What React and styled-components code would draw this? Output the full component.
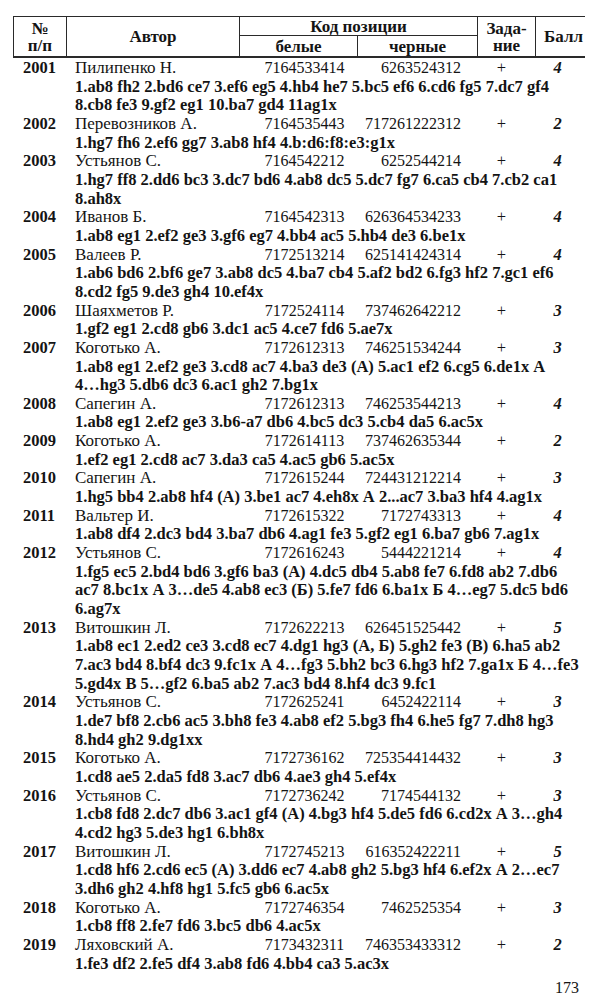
import React from 'react';
import styled, { createGlobalStyle } from 'styled-components';

const GlobalStyle = createGlobalStyle`
  html, body {
    margin: 0;
    padding: 0;
    background: #fff;
  }
  body {
    font-family: 'Liberation Serif', 'Times New Roman', serif;
    color: #141414;
  }
`;

const entries = [
  { n: 2001, author: 'Пилипенко Н.', w: '7164533414', b: '6263524312', s: '4', moves: ['1.ab8 fh2 2.bd6 ce7 3.ef6 eg5 4.hb4 he7 5.bc5 ef6 6.cd6 fg5 7.dc7 gf4', '8.cb8 fe3 9.gf2 eg1 10.ba7 gd4 11ag1x'] },
  { n: 2002, author: 'Перевозников А.', w: '7164535443', b: '717261222312', s: '2', moves: ['1.hg7 fh6 2.ef6 gg7 3.ab8 hf4 4.b:d6:f8:e3:g1x'] },
  { n: 2003, author: 'Устьянов С.', w: '7164542212', b: '6252544214', s: '4', moves: ['1.hg7 ff8 2.dd6 bc3 3.dc7 bd6 4.ab8 dc5 5.dc7 fg7 6.ca5 cb4 7.cb2 ca1', '8.ah8x'] },
  { n: 2004, author: 'Иванов Б.', w: '7164542313', b: '626364534233', s: '4', moves: ['1.ab8 eg1 2.ef2 ge3 3.gf6 eg7 4.bb4 ac5 5.hb4 de3 6.be1x'] },
  { n: 2005, author: 'Валеев Р.', w: '7172513214', b: '625141424314', s: '4', moves: ['1.ab6 bd6 2.bf6 ge7 3.ab8 dc5 4.ba7 cb4 5.af2 bd2 6.fg3 hf2 7.gc1 ef6', '8.cd2 fg5 9.de3 gh4 10.ef4x'] },
  { n: 2006, author: 'Шаяхметов Р.', w: '7172524114', b: '737462642212', s: '3', moves: ['1.gf2 eg1 2.cd8 gb6 3.dc1 ac5 4.ce7 fd6 5.ae7x'] },
  { n: 2007, author: 'Коготько А.', w: '7172612313', b: '746251534244', s: '3', moves: ['1.ab8 eg1 2.ef2 ge3 3.cd8 ac7 4.ba3 de3 (А) 5.ac1 ef2 6.cg5 6.de1x А', '4…hg3 5.db6 dc3 6.ac1 gh2 7.bg1x'] },
  { n: 2008, author: 'Сапегин А.', w: '7172612313', b: '746253544213', s: '4', moves: ['1.ab8 eg1 2.ef2 ge3 3.b6-a7 db6 4.bc5 dc3 5.cb4 da5 6.ac5x'] },
  { n: 2009, author: 'Коготько А.', w: '7172614113', b: '737462635344', s: '2', moves: ['1.ef2 eg1 2.cd8 ac7 3.da3 ca5 4.ac5 gb6 5.ac5x'] },
  { n: 2010, author: 'Сапегин А.', w: '7172615244', b: '724431212214', s: '3', moves: ['1.hg5 bb4 2.ab8 hf4 (А) 3.be1 ac7 4.eh8x А 2...ac7 3.ba3 hf4 4.ag1x'] },
  { n: 2011, author: 'Вальтер И.', w: '7172615322', b: '7172743313', s: '4', moves: ['1.ab8 df4 2.dc3 bd4 3.ba7 db6 4.ag1 fe3 5.gf2 eg1 6.ba7 gb6 7.ag1x'] },
  { n: 2012, author: 'Устьянов С.', w: '7172616243', b: '5444221214', s: '4', moves: ['1.fg5 ec5 2.bd4 bd6 3.gf6 ba3 (А) 4.dc5 db4 5.ab8 fe7 6.fd8 ab2 7.db6', 'ac7 8.bc1x А 3…de5 4.ab8 ec3 (Б) 5.fe7 fd6 6.ba1x Б 4…eg7 5.dc5 bd6', '6.ag7x'] },
  { n: 2013, author: 'Витошкин Л.', w: '7172622213', b: '626451525442', s: '5', moves: ['1.ab8 ec1 2.ed2 ce3 3.cd8 ec7 4.dg1 hg3 (А, Б) 5.gh2 fe3 (В) 6.ha5 ab2', '7.ac3 bd4 8.bf4 dc3 9.fc1x А 4…fg3 5.bh2 bc3 6.hg3 hf2 7.ga1x Б 4…fe3', '5.gd4x В 5…gf2 6.ba5 ab2 7.ac3 bd4 8.hf4 dc3 9.fc1'] },
  { n: 2014, author: 'Устьянов С.', w: '7172625241', b: '6452422114', s: '3', moves: ['1.de7 bf8 2.cb6 ac5 3.bh8 fe3 4.ab8 ef2 5.bg3 fh4 6.he5 fg7 7.dh8 hg3', '8.hd4 gh2 9.dg1xx'] },
  { n: 2015, author: 'Коготько А.', w: '7172736162', b: '725354414432', s: '3', moves: ['1.cd8 ae5 2.da5 fd8 3.ac7 db6 4.ae3 gh4 5.ef4x'] },
  { n: 2016, author: 'Устьянов С.', w: '7172736242', b: '7174544132', s: '3', moves: ['1.cb8 fd8 2.dc7 db6 3.ac1 gf4 (А) 4.bg3 hf4 5.de5 fd6 6.cd2x А 3…gh4', '4.cd2 hg3 5.de3 hg1 6.bh8x'] },
  { n: 2017, author: 'Витошкин Л.', w: '7172745213', b: '616352422211', s: '5', moves: ['1.cd8 hf6 2.cd6 ec5 (А) 3.dd6 ec7 4.ab8 gh2 5.bg3 hf4 6.ef2x А 2…ec7', '3.dh6 gh2 4.hf8 hg1 5.fc5 gb6 6.ac5x'] },
  { n: 2018, author: 'Коготько А.', w: '7172746354', b: '7462525354', s: '3', moves: ['1.cb8 ff8 2.fe7 fd6 3.bc5 db6 4.ac5x'] },
  { n: 2019, author: 'Ляховский А.', w: '7173432311', b: '746353433312', s: '2', moves: ['1.fe3 df2 2.fe5 df4 3.ab8 fd6 4.bb4 ca3 5.ac3x'] },
];

const COLS = '52px 172px 117px 119px 57px 55px';

const Page = styled.div`
  width: 592px;
  box-sizing: border-box;
  padding: 16px 7px 0 13px;
`;

const Header = styled.div`
  display: grid;
  grid-template-columns: ${COLS};
  grid-template-rows: 18px 20px;
  gap: 1px;
  background: #2a2a2a;
  border: 1px solid #2a2a2a;
  border-bottom-width: 2px;
  width: 572px;
  box-sizing: border-box;
`;

const HeadCell = styled.div`
  background: #fff;
  display: flex;
  flex-direction: column;
  align-items: center;
  justify-content: center;
  font-size: 17px;
  font-weight: bold;
  line-height: 17px;
  text-align: center;
  grid-column: ${(p) => p.$col || 'auto'};
  grid-row: ${(p) => p.$row || 'auto'};
`;

const Body = styled.div`
  padding-top: 1px;
  font-size: 16.5px;
  line-height: 18.65px;
`;

const Entry = styled.div`
  display: grid;
  grid-template-columns: ${COLS};
  width: 572px;
  white-space: nowrap;
`;

const Num = styled.div`
  font-weight: bold;
  padding-left: 10px;
`;

const Author = styled.div`
  padding-left: 10px;
  font-size: 17px;
`;

const Code = styled.div`
  text-align: ${(p) => (p.$black ? 'right' : 'center')};
  padding-left: ${(p) => (p.$black ? '0' : '18px')};
  padding-right: ${(p) => (p.$black ? '12px' : '0')};
  font-size: 16px;
`;

const Task = styled.div`
  text-align: center;
`;

const Score = styled.div`
  text-align: center;
  font-weight: bold;
  font-style: italic;
`;

const Moves = styled.div`
  grid-column: 2 / -1;
  padding-left: 10px;
  font-weight: bold;
`;

const PageNum = styled.div`
  margin-top: 6px;
  padding-right: 6px;
  text-align: right;
  font-size: 16px;
  line-height: 18px;
  width: 572px;
  box-sizing: border-box;
`;

export default function App() {
  return (
    <>
      <GlobalStyle />
      <Page>
        <Header>
          <HeadCell $row="1 / 3">
            <span>№</span>
            <span>п/п</span>
          </HeadCell>
          <HeadCell $row="1 / 3">Автор</HeadCell>
          <HeadCell $col="3 / 5">Код позиции</HeadCell>
          <HeadCell $row="1 / 3" $col="5">
            <span>Зада-</span>
            <span>ние</span>
          </HeadCell>
          <HeadCell $row="1 / 3" $col="6">Балл</HeadCell>
          <HeadCell $row="2" $col="3">белые</HeadCell>
          <HeadCell $row="2" $col="4">черные</HeadCell>
        </Header>
        <Body>
          {entries.map((e) => (
            <Entry key={e.n}>
              <Num>{e.n}</Num>
              <Author>{e.author}</Author>
              <Code>{e.w}</Code>
              <Code $black>{e.b}</Code>
              <Task>+</Task>
              <Score>{e.s}</Score>
              {e.moves.map((m, i) => (
                <Moves key={i}>{m}</Moves>
              ))}
            </Entry>
          ))}
        </Body>
        <PageNum>173</PageNum>
      </Page>
    </>
  );
}
